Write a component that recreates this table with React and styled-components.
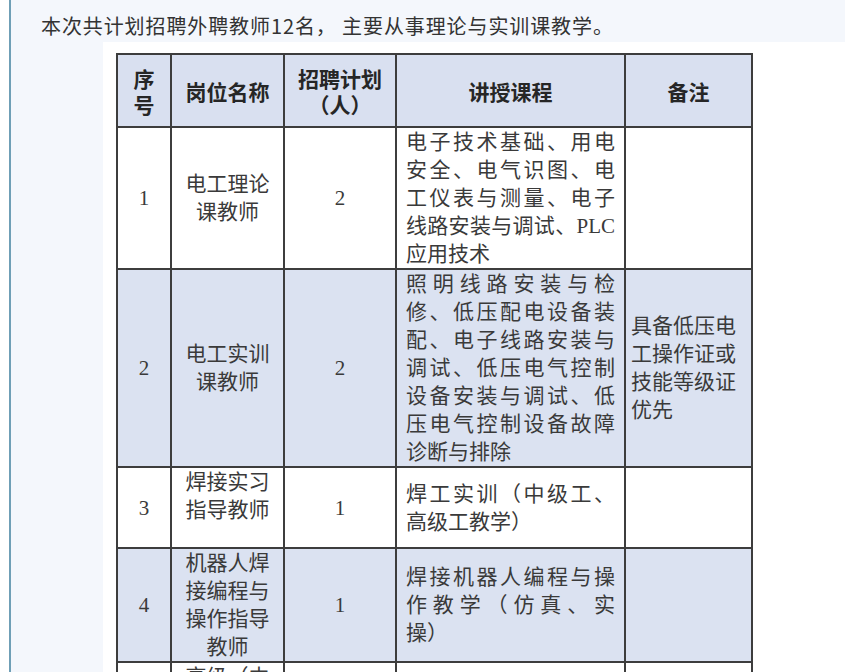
import React from "react";
import styled, { createGlobalStyle } from "styled-components";

const Global = createGlobalStyle`
  html, body { margin: 0; padding: 0; background: #ffffff; }
  body { font-family: "Noto Sans CJK SC", sans-serif; }
`;

const Page = styled.div`
  display: flex;
  min-height: 672px;
  padding-left: 9px;
  background: #ffffff;
`;

const Content = styled.div`
  flex: 1;
  border-left: 2px solid #6f9fb6;
  background: #f4f7fc;
  display: flex;
  flex-direction: column;
`;

const Intro = styled.p`
  margin: 0;
  box-sizing: border-box;
  height: 42px;
  padding: 8px 0 0 30px;
  display: flex;
  align-items: center;
  font-family: "Noto Sans CJK SC", sans-serif;
  font-size: 20px;
  color: #333333;
  letter-spacing: 0.9px;
  text-spacing-trim: space-all;
  white-space: pre;
`;

const Figure = styled.div`
  margin-left: 92px;
  flex: 1;
  background: #ffffff;
  padding: 11px 0 0 13px;
  overflow: hidden;
`;

const Table = styled.table`
  border-collapse: collapse;
  table-layout: fixed;
  width: 637px;
  font-family: "Liberation Serif", "Noto Sans CJK SC", serif;
  color: #3a3a3a;
  text-spacing-trim: space-all;
`;

const Row = styled.tr`
  background: ${(p) => (p.$shaded ? "#dbe2f1" : "#ffffff")};
  height: ${(p) => p.$h}px;
`;

const Head = styled.th`
  border: 2px solid #3d3d3d;
  background: #d9e0f0;
  font-family: "Noto Sans CJK SC", sans-serif;
  font-weight: 700;
  font-size: 21px;
  line-height: 26px;
  color: #262626;
  text-align: center;
  vertical-align: middle;
  padding: 0 4px;
`;

const Cell = styled.td`
  border: 2px solid #3d3d3d;
  font-size: 21px;
  line-height: 28px;
  vertical-align: ${(p) => p.$valign || "middle"};
  text-align: ${(p) => p.$align || "center"};
  padding: ${(p) => p.$pad || "0 8px"};
  word-break: break-all;
`;

const cols = [54, 113, 112, 229, 127];

const rows = [
  {
    no: "1",
    name: "电工理论课教师",
    plan: "2",
    course: "电子技术基础、用电安全、电气识图、电工仪表与测量、电子线路安装与调试、PLC应用技术",
    note: "",
    h: 141,
  },
  {
    no: "2",
    name: "电工实训课教师",
    plan: "2",
    course:
      "照明线路安装与检修、低压配电设备装配、电子线路安装与调试、低压电气控制设备安装与调试、低压电气控制设备故障诊断与排除",
    note: "具备低压电工操作证或技能等级证优先",
    h: 197,
    shaded: true,
  },
  {
    no: "3",
    name: "焊接实习指导教师",
    plan: "1",
    course: "焊工实训（中级工、高级工教学）",
    note: "",
    h: 81,
    nameTop: true,
  },
  {
    no: "4",
    name: "机器人焊接编程与操作指导教师",
    plan: "1",
    course: "焊接机器人编程与操作教学（仿真、实操）",
    note: "",
    h: 113,
    shaded: true,
  },
  {
    no: "5",
    name: "高级（中级）焊工实训教师",
    plan: "1",
    course: "焊条电弧焊、二氧化碳气体保护焊实训教学",
    note: "",
    h: 120,
    nameTop: true,
  },
];

export default function App() {
  return (
    <>
      <Global />
      <Page>
        <Content>
          <Intro>本次共计划招聘外聘教师12名， 主要从事理论与实训课教学。</Intro>
          <Figure>
            <Table>
              <colgroup>
                {cols.map((w, i) => (
                  <col key={i} style={{ width: w }} />
                ))}
              </colgroup>
              <thead>
                <Row $h={73}>
                  <Head>序<br />号</Head>
                  <Head>岗位名称</Head>
                  <Head>招聘计划<br />（人）</Head>
                  <Head>讲授课程</Head>
                  <Head>备注</Head>
                </Row>
              </thead>
              <tbody>
                {rows.map((r) => (
                  <Row key={r.no} $shaded={r.shaded} $h={r.h}>
                    <Cell>{r.no}</Cell>
                    <Cell $valign={r.nameTop ? "top" : "middle"}>{r.name}</Cell>
                    <Cell>{r.plan}</Cell>
                    <Cell $align="justify" $pad="0 9px 0 9px">
                      {r.course}
                    </Cell>
                    <Cell $align="left" $pad="0 10px 0 5px">
                      {r.note}
                    </Cell>
                  </Row>
                ))}
              </tbody>
            </Table>
          </Figure>
        </Content>
      </Page>
    </>
  );
}
